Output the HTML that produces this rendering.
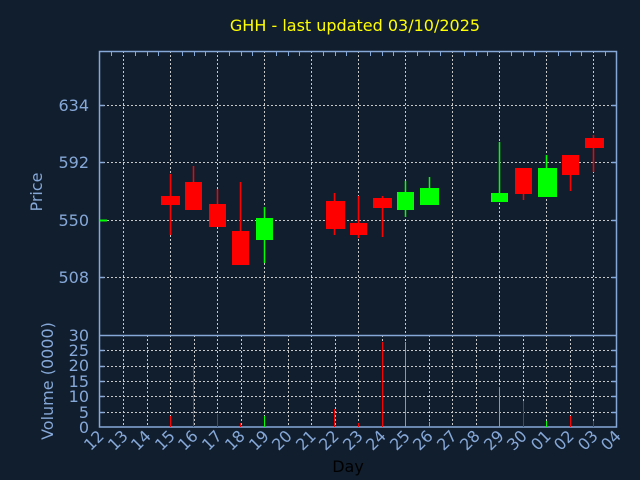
<!DOCTYPE html>
<html><head><meta charset="utf-8"><style>
html,body{margin:0;padding:0;background:#111e2e;}
svg{display:block;}
text{font-family:"DejaVu Sans","Liberation Sans",sans-serif;}
</style></head><body>
<svg width="640" height="480" viewBox="0 0 640 480" xmlns="http://www.w3.org/2000/svg">
<rect width="640" height="480" fill="#111e2e"/>
<text x="355" y="31" fill="#ffff00" font-size="16" text-anchor="middle">GHH - last updated 03/10/2025</text>
<g stroke="#c8c8c8" stroke-width="1" stroke-dasharray="2,2" fill="none">
<path d="M123.5 51V335M170.5 51V335M217.5 51V335M264.5 51V335M311.5 51V335M358.5 51V335M405.5 51V335M452.5 51V335M499.5 51V335M546.5 51V335M593.5 51V335"/>
<path d="M99 105.5H617M99 162.5H617M99 220.5H617M99 277.5H617"/>
<path d="M123.5 335V427M147.5 335V427M170.5 335V427M194.5 335V427M217.5 335V427M241.5 335V427M264.5 335V427M288.5 335V427M311.5 335V427M335.5 335V427M358.5 335V427M382.5 335V427M405.5 335V427M429.5 335V427M452.5 335V427M476.5 335V427M499.5 335V427M523.5 335V427M546.5 335V427M570.5 335V427M593.5 335V427"/>
<path d="M99 412.5H617M99 396.5H617M99 381.5H617M99 366.5H617M99 350.5H617"/>
</g>
<g stroke="#86a8d8" stroke-width="1.5" fill="none">
<rect x="99.5" y="51.5" width="517" height="375.5"/>
<path d="M99 335.5H617"/>
<path d="M99.5 105.5h5M99.5 162.5h5M99.5 220.5h5M99.5 277.5h5M616.5 105.5h-5M616.5 162.5h-5M616.5 220.5h-5M616.5 277.5h-5"/>
<path d="M99.5 412.5h5M99.5 396.5h5M99.5 381.5h5M99.5 366.5h5M99.5 350.5h5M616.5 412.5h-5M616.5 396.5h-5M616.5 381.5h-5M616.5 366.5h-5M616.5 350.5h-5"/>
</g>
<g stroke="#86a8d8" stroke-width="1" fill="none">
<path d="M111.5 52v4M135.5 52v4M147.5 52v4M158.5 52v4M182.5 52v4M194.5 52v4M205.5 52v4M229.5 52v4M241.5 52v4M252.5 52v4M276.5 52v4M288.5 52v4M299.5 52v4M323.5 52v4M335.5 52v4M346.5 52v4M370.5 52v4M382.5 52v4M393.5 52v4M417.5 52v4M429.5 52v4M440.5 52v4M464.5 52v4M476.5 52v4M487.5 52v4M511.5 52v4M523.5 52v4M534.5 52v4M558.5 52v4M570.5 52v4M581.5 52v4M605.5 52v4"/>
</g>
<g font-size="16" fill="#86a8d8" text-anchor="end">
<text x="89" y="111">634</text><text x="89" y="168">592</text><text x="89" y="226">550</text><text x="89" y="283">508</text>
<text x="89" y="341">30</text><text x="89" y="356">25</text><text x="89" y="371">20</text><text x="89" y="387">15</text><text x="89" y="402">10</text><text x="89" y="418">5</text><text x="89" y="433">0</text>
</g>
<text transform="translate(42,192) rotate(-90)" font-size="16" fill="#86a8d8" text-anchor="middle">Price</text>
<text transform="translate(53,381) rotate(-90)" font-size="16" fill="#86a8d8" text-anchor="middle">Volume (0000)</text>
<text x="348" y="472" font-size="16" fill="#000" text-anchor="middle">Day</text>
<g font-size="16" fill="#86a8d8" text-anchor="end">
<text transform="translate(105,437) rotate(-45)">12</text>
<text transform="translate(129,437) rotate(-45)">13</text>
<text transform="translate(152,437) rotate(-45)">14</text>
<text transform="translate(176,437) rotate(-45)">15</text>
<text transform="translate(199,437) rotate(-45)">16</text>
<text transform="translate(223,437) rotate(-45)">17</text>
<text transform="translate(246,437) rotate(-45)">18</text>
<text transform="translate(270,437) rotate(-45)">19</text>
<text transform="translate(293,437) rotate(-45)">20</text>
<text transform="translate(317,437) rotate(-45)">21</text>
<text transform="translate(340,437) rotate(-45)">22</text>
<text transform="translate(364,437) rotate(-45)">23</text>
<text transform="translate(387,437) rotate(-45)">24</text>
<text transform="translate(411,437) rotate(-45)">25</text>
<text transform="translate(434,437) rotate(-45)">26</text>
<text transform="translate(458,437) rotate(-45)">27</text>
<text transform="translate(481,437) rotate(-45)">28</text>
<text transform="translate(505,437) rotate(-45)">29</text>
<text transform="translate(528,437) rotate(-45)">30</text>
<text transform="translate(552,437) rotate(-45)">01</text>
<text transform="translate(575,437) rotate(-45)">02</text>
<text transform="translate(599,437) rotate(-45)">03</text>
<text transform="translate(622,437) rotate(-45)">04</text>
</g>
<g stroke-width="1.5">
<path stroke="#00ff00" d="M100 220.5h7" stroke-width="2"/>
<path stroke="#ff0000" d="M170.5 174V235M193.5 166V210M217.5 189V227M240.5 182V265M334.5 193V235M358.5 196V238M382.5 196V237M523.5 168V200M570.5 155V191M593.5 135V172"/>
<path stroke="#00ff00" d="M264.5 207V263M405.5 181V217M429.5 177V205M499.5 142V202M546.5 155V197"/>
</g>
<g fill="#ff0000">
<rect x="161" y="196" width="19" height="9"/>
<rect x="185" y="182" width="17" height="28"/>
<rect x="209" y="204" width="17" height="23"/>
<rect x="232" y="231" width="17" height="34"/>
<rect x="326" y="201" width="19" height="28"/>
<rect x="350" y="223" width="17" height="12"/>
<rect x="373" y="198" width="19" height="10"/>
<rect x="515" y="168" width="17" height="26"/>
<rect x="562" y="155" width="17" height="20"/>
<rect x="585" y="138" width="19" height="10"/>
</g>
<g fill="#00ff00">
<rect x="256" y="218" width="17" height="22"/>
<rect x="397" y="192" width="17" height="18"/>
<rect x="420" y="188" width="19" height="17"/>
<rect x="491" y="193" width="17" height="9"/>
<rect x="538" y="168" width="19" height="29"/>
</g>
<g stroke-width="1">
<path stroke="#ff0000" d="M170.5 427V416M193.5 427V366M217.5 427V414M240.5 427V423M334.5 427V409M358.5 427V423M382.5 427V342M523.5 427V401M570.5 427V416M593.5 427V421"/>
<path stroke="#00ff00" d="M264.5 427V416M405.5 427V342M429.5 427V422M499.5 427V387M546.5 427V421"/>
</g>
</svg>
</body></html>
